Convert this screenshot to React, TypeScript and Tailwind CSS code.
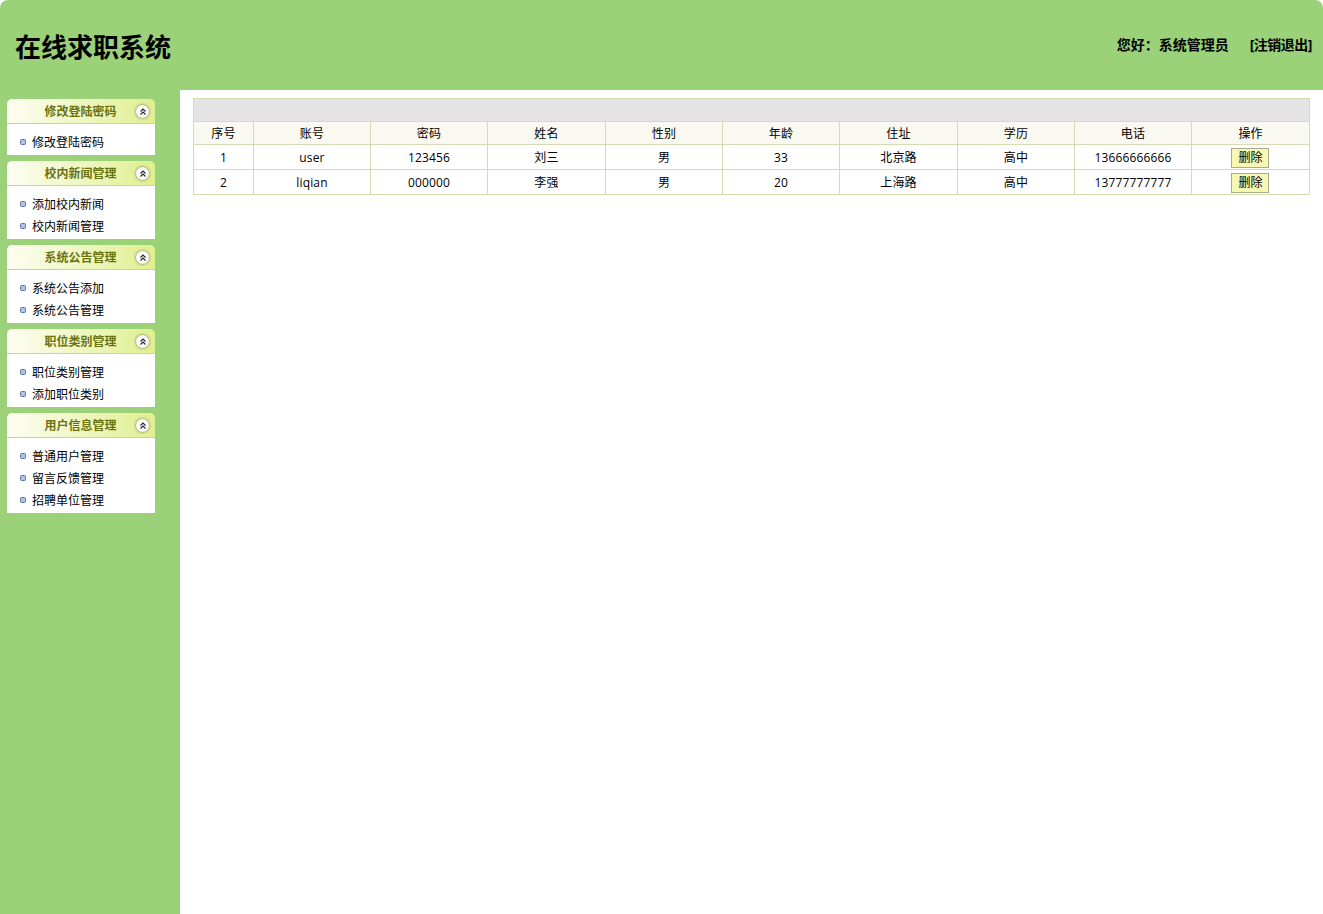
const menus = [
  { title: '修改登陆密码', items: ['修改登陆密码'] },
  { title: '校内新闻管理', items: ['添加校内新闻', '校内新闻管理'] },
  { title: '系统公告管理', items: ['系统公告添加', '系统公告管理'] },
  { title: '职位类别管理', items: ['职位类别管理', '添加职位类别'] },
  { title: '用户信息管理', items: ['普通用户管理', '留言反馈管理', '招聘单位管理'] },
];

const columns = ['序号', '账号', '密码', '姓名', '性别', '年龄', '住址', '学历', '电话', '操作'];

const users = [
  ['1', 'user', '123456', '刘三', '男', '33', '北京路', '高中', '13666666666'],
  ['2', 'liqian', '000000', '李强', '男', '20', '上海路', '高中', '13777777777'],
];

function CollapseIcon() {
  return (
    <span className="flex h-[13px] w-[13px] items-center justify-center rounded-full bg-white shadow-[0_0_3px_#666]">
      <svg width="8" height="8" viewBox="0 0 8 8" fill="none" stroke="#222" strokeWidth="1.1">
        <path d="M1.5 3.5 4 1l2.5 2.5M1.5 6.5 4 4l2.5 2.5" />
      </svg>
    </span>
  );
}

function MenuPanel({ title, items }: { title: string; items: string[] }) {
  return (
    <div className="w-[148px]">
      <div className="relative flex h-[25px] items-center justify-center rounded-t-[5px] border-b border-[#c9d68f] bg-gradient-to-r from-[#fdfdf2] to-[#e0ef8e] pr-px pt-[2px]">
        <span className="text-xs font-bold text-[#6b7310]">{title}</span>
        <span className="absolute right-[6px] top-[6px] flex">
          <CollapseIcon />
        </span>
      </div>
      <ul className="bg-white pb-[2px] pt-[7px]">
        {items.map((item) => (
          <li key={item} className="flex h-[22px] items-center pl-[13px] text-xs text-black">
            <span className="mr-[6px] h-[6px] w-[6px] rounded-[1.5px] border border-[#5f75a5] bg-[#aec2ea]" />
            <span className="pt-[2px]">{item}</span>
          </li>
        ))}
      </ul>
    </div>
  );
}

export default function App() {
  return (
    <div className="h-[914px] w-[1323px] overflow-hidden bg-white font-['Open_Sans','Noto_Sans_CJK_SC',sans-serif]">
      <div className="flex h-[90px] items-center justify-between rounded-t-[8px] bg-[#9bd179] pl-[15px] pr-[11px]">
        <h1 className="pt-[4px] text-[26px] font-bold leading-none text-black">在线求职系统</h1>
        <div className="flex gap-[21px] text-sm font-bold text-black">
          <span>您好：系统管理员</span>
          <span className="tracking-[-0.5px]">[注销退出]</span>
        </div>
      </div>
      <div className="flex h-[824px]">
        <aside className="flex w-[180px] shrink-0 flex-col gap-[6px] bg-[#9bd179] pl-[7px] pt-[9px]">
          {menus.map((menu) => (
            <MenuPanel key={menu.title} title={menu.title} items={menu.items} />
          ))}
        </aside>
        <main className="flex-1 pl-[13px] pr-[13px] pt-[8px]">
          <table className="w-[1116px] table-fixed border-collapse text-center text-xs tracking-[0.15px] text-black">
            <colgroup>
              <col className="w-[60px]" />
              <col className="w-[117px]" />
              <col className="w-[117px]" />
              <col className="w-[118px]" />
              <col className="w-[117px]" />
              <col className="w-[117px]" />
              <col className="w-[118px]" />
              <col className="w-[117px]" />
              <col className="w-[117px]" />
              <col className="w-[118px]" />
            </colgroup>
            <thead>
              <tr className="h-[23px] bg-[#e4e4e4]">
                <th colSpan={10} className="border border-[#d6dbb4]" />
              </tr>
              <tr className="h-[23px] bg-[#f9f9f1]">
                {columns.map((col) => (
                  <th key={col} className="border border-[#d6dbb4] pt-[2px] font-normal">
                    {col}
                  </th>
                ))}
              </tr>
            </thead>
            <tbody>
              {users.map((row) => (
                <tr key={row[0]} className="h-[25px]">
                  {row.map((cell, i) => (
                    <td key={i} className="border border-[#d6dbb4] pt-[2px]">
                      {cell}
                    </td>
                  ))}
                  <td className="border border-[#d6dbb4] pt-[2px]">
                    <button className="mr-[2px] h-[20px] w-[38px] border border-[#a9ab8e] bg-[#f6f8b4] pl-[2px] text-xs text-black">
                      删除
                    </button>
                  </td>
                </tr>
              ))}
            </tbody>
          </table>
        </main>
      </div>
    </div>
  );
}
